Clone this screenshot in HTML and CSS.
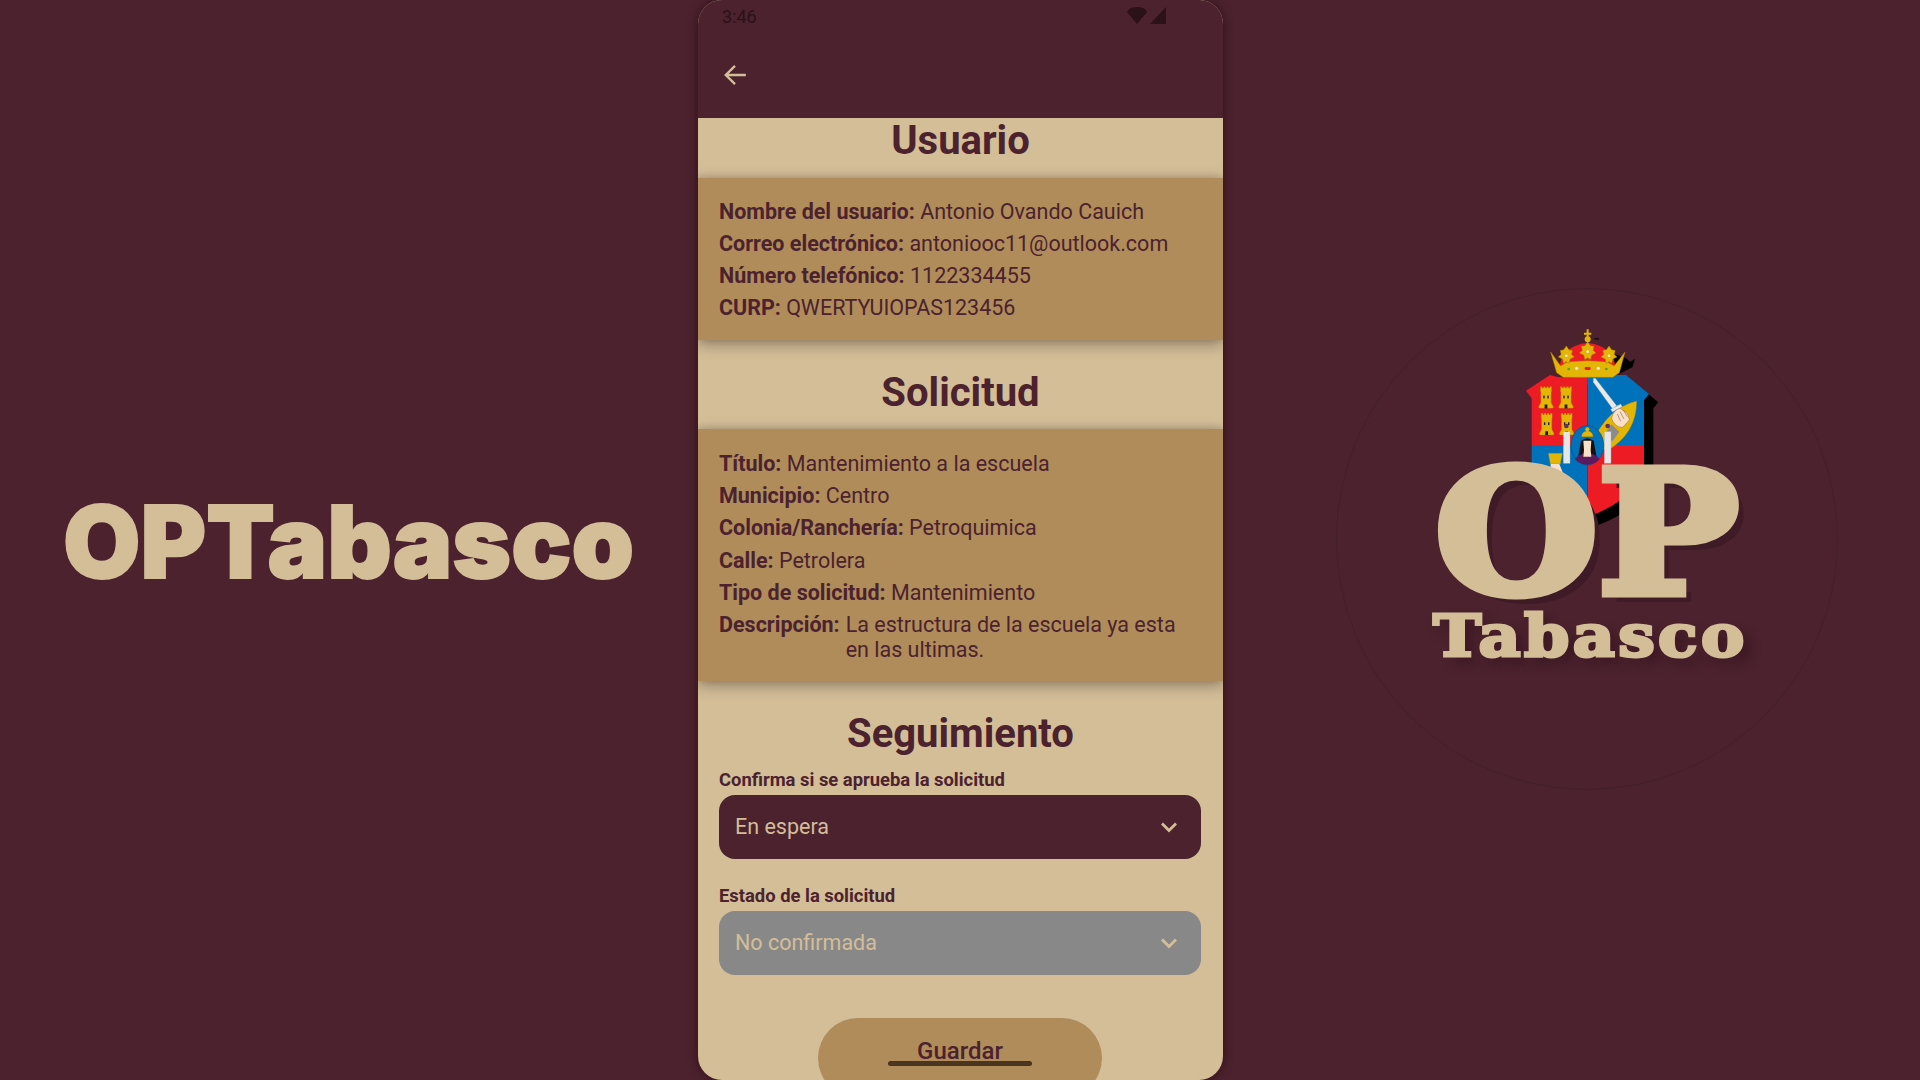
FILE: index.html
```html
<!DOCTYPE html>
<html lang="es">
<head>
    <meta charset="UTF-8">
    <meta name="viewport" content="width=device-width, initial-scale=1.0">
    <title>OPTabasco</title>
    <link rel="stylesheet" href="styles.css">
</head>
<body>
    <svg class="defs" width="0" height="0">
        <symbol id="castillo" viewBox="0 0 44 66">
            <path d="M6 2h5v4h4V2h5v4h4V2h5v4h4V2h5v14l-1 2v30l7 14-4 3H4l-4-3 7-14V18L6 16z" fill="#e3b505" stroke="#a98300" stroke-width="1"/>
            <rect x="14" y="28" width="4" height="8" fill="#1a1a1a"/>
            <rect x="26" y="28" width="4" height="8" fill="#1a1a1a"/>
            <rect x="18" y="54" width="8" height="12" fill="#1a1a1a"/>
        </symbol>
        <symbol id="hoja" viewBox="0 0 50 60">
            <path d="M25 0l8 12 11 2-3 12 9 8-13 6-4 14-8-6-8 6-4-14-13-6 9-8-3-12 11-2z" fill="#e3b505" stroke="#a98300" stroke-width="1.5"/>
            <circle cx="25" cy="30" r="4" fill="#e8e8e8"/>
        </symbol>
    </svg>

    <div class="pantalla">
        <div class="lado-izq">
            <h1 class="marca">OPTabasco</h1>
        </div>

        <div class="telefono">
            <div class="cabecera">
                <div class="status">
                    <span class="hora">3:46</span>
                    <span class="status-iconos">
                        <svg width="20" height="17" viewBox="0 0 20 17"><path d="M0 5Q2 0 10 0T20 5L10 17z" fill="#2b1118"/></svg>
                        <svg width="17" height="17" viewBox="0 0 17 17"><path d="M16 0v17H0z" fill="#2b1118"/></svg>
                    </span>
                </div>
                <svg class="atras" width="26" height="26" viewBox="0 0 24 24"><path d="M22 12H3.500M12 3.500L3.500 12l8.500 8.500" fill="none" stroke="#d3be98" stroke-width="2.200"/></svg>
            </div>

            <h2 class="titulo titulo-usuario">Usuario</h2>
            <div class="tarjeta">
                <p><b>Nombre del usuario:</b> Antonio Ovando Cauich</p>
                <p><b>Correo electrónico:</b> antoniooc11@outlook.com</p>
                <p><b>Número telefónico:</b> 1122334455</p>
                <p><b>CURP:</b> QWERTYUIOPAS123456</p>
            </div>

            <h2 class="titulo titulo-solicitud">Solicitud</h2>
            <div class="tarjeta">
                <p><b>Título:</b> Mantenimiento a la escuela</p>
                <p><b>Municipio:</b> Centro</p>
                <p><b>Colonia/Ranchería:</b> Petroquimica</p>
                <p><b>Calle:</b> Petrolera</p>
                <p><b>Tipo de solicitud:</b> Mantenimiento</p>
                <p class="fila-desc"><b>Descripción:</b> <span>La estructura de la escuela ya esta en las ultimas.</span></p>
            </div>

            <h2 class="titulo titulo-seguimiento">Seguimiento</h2>
            <div class="form">
                <label class="etiqueta">Confirma si se aprueba la solicitud</label>
                <div class="combo">
                    <span>En espera</span>
                    <svg width="18" height="12" viewBox="0 0 18 12"><path d="M2 2.500l7 7 7-7" fill="none" stroke="#d3be98" stroke-width="2.800"/></svg>
                </div>
                <label class="etiqueta etiqueta-2">Estado de la solicitud</label>
                <div class="combo combo-off">
                    <span>No confirmada</span>
                    <svg width="18" height="12" viewBox="0 0 18 12"><path d="M2 2.500l7 7 7-7" fill="none" stroke="#d3be98" stroke-width="2.800"/></svg>
                </div>
                <button class="guardar">Guardar</button>
            </div>
            <div class="home-bar"></div>
        </div>

        <div class="lado-der">
            <div class="logo">
                <div class="circulo"></div>
                <svg class="escudo" width="170" height="210" viewBox="0 0 510 630">
                    <!-- sombra -->
                    <path d="M106 237L178 190Q220 205 290 190H406L475 247L460 265V465Q440 560 290 617Q120 560 123 465V260z" fill="#000"/>
                    <path d="M330 100q50 10 60 25l15-8-8 25-60 30z" fill="#000"/>
                    <path d="M283 55h14v3h-14z" fill="#000"/>
                    <!-- escudo -->
                    <clipPath id="forma"><path d="M78 212L150 165Q192 180 262 165H378L447 222L432 240V440Q412 535 262 592Q110 535 95 440V235z"/></clipPath>
                    <g clip-path="url(#forma)">
                        <rect x="60" y="150" width="202" height="225" fill="#ed1c24"/>
                        <rect x="262" y="150" width="200" height="225" fill="#0072bc"/>
                        <rect x="60" y="375" width="202" height="230" fill="#0072bc"/>
                        <rect x="262" y="375" width="200" height="230" fill="#ed1c24"/>
                    </g>
                    <use href="#castillo" x="114" y="198" width="48" height="68"/>
                    <use href="#castillo" x="174" y="198" width="48" height="68"/>
                    <use href="#castillo" x="116" y="278" width="48" height="68"/>
                    <use href="#castillo" x="176" y="278" width="48" height="68"/>
                    <!-- brazo y espada -->
                    <path d="M275 372Q320 265 410 243Q410 340 322 392z" fill="#e3b505" stroke="#a98300" stroke-width="1"/>
                    <path d="M312 345l22-32 24 22-20 28z" fill="#8a8a8a"/>
                    <path d="M280 175l6 0 64 82-12 10-58-80z" fill="#e9e9e9" stroke="#999" stroke-width="1"/>
                    <path d="M332 268l30-16 5 8-30 16z" fill="#e9e9e9" stroke="#999" stroke-width="1"/>
                    <path d="M335 295q5-25 25-30l22 15 6 20-20 22q-25 0-33-27z" fill="#fbe0c8" stroke="#6b4a3a" stroke-width="1"/>
                    <path d="M360 275l12 22M370 270l12 20M352 282l10 22" fill="none" stroke="#6b4a3a" stroke-width="1.500"/>
                    <!-- columnas -->
                    <rect x="190" y="335" width="20" height="95" fill="#e6e6e6" stroke="#aaa" stroke-width="1"/>
                    <rect x="313" y="335" width="20" height="95" fill="#e6e6e6" stroke="#aaa" stroke-width="1"/>
                    <circle cx="199" cy="318" r="7" fill="#662d5e"/>
                    <circle cx="323" cy="318" r="7" fill="#662d5e"/>
                    <!-- ovalo -->
                    <ellipse cx="262" cy="376" rx="49" ry="59" fill="#0072bc" stroke="#0a4f80" stroke-width="2"/>
                    <path d="M225 418q15-22 37-22t37 22q-15 16-37 16t-37-16z" fill="#5c1a5e"/>
                    <path d="M243 362q19-15 38 0l8 45-27-12-27 12z" fill="#111"/>
                    <path d="M250 362h24l-2 28 2 20h-24l2-20z" fill="#fbe0c8"/>
                    <path d="M245 350q0-15 17-18 17 3 17 18z" fill="#e3b505" stroke="#a98300"/>
                    <circle cx="262" cy="328" r="6" fill="#e3b505"/>
                    <!-- reina -->
                    <path d="M145 400h42l-6 32h-30z" fill="#e3b505" stroke="#a98300" stroke-width="1"/>
                    <path d="M152 432h26l22 55-14 8-10-18h-24z" fill="#fbe0c8"/>
                    <path d="M182 472l12 18 14-2 8 20-14 6-14-14-8-20z" fill="#5c1a3a"/>
                    <!-- corona -->
                    <path d="M180 152Q175 100 225 78Q262 60 300 78Q350 100 345 152z" fill="#ed1c24"/>
                    <path d="M152 96l30 42 20-12 30-2 30-2 30 2 30 2 20 12 33-42-17 62-20 14H190l-20-14z" fill="#e3b505" stroke="#a98300" stroke-width="1.500"/>
                    <use href="#hoja" x="174" y="78" width="50" height="58"/>
                    <use href="#hoja" x="238" y="64" width="50" height="62"/>
                    <use href="#hoja" x="302" y="78" width="50" height="58"/>
                    <rect x="254" y="141" width="18" height="9" rx="4" fill="#ed1c24"/>
                    <circle cx="230" cy="145" r="5" fill="#e8e8e8"/>
                    <circle cx="295" cy="145" r="5" fill="#e8e8e8"/>
                    <circle cx="206" cy="147" r="4" fill="#39a845"/>
                    <circle cx="319" cy="147" r="4" fill="#39a845"/>
                    <circle cx="263" cy="58" r="9" fill="#e3b505"/>
                    <path d="M260 28h6v10h8v6h-8v10h-6V44h-8v-6h8z" fill="#e3b505"/>
                </svg>
                <div class="logo-op">OP</div>
                <div class="logo-tabasco">Tabasco</div>
            </div>
        </div>
    </div>
</body>
</html>
```

FILE: styles.css
```css
* {
    box-sizing: border-box;
}
body {
    margin: 0;
    background-color: #4b222e;
    font-family: Roboto, sans-serif;
    color: #4b222e;
    overflow: hidden;
}
.defs {
    display: block;
    height: 0;
}
.pantalla {
    display: flex;
    height: 1080px;
}
.lado-izq {
    width: 698px;
    display: flex;
    align-items: center;
    padding: 0 0 0 63px;
}
.marca {
    margin: 4px 0 0;
    font-family: Inter, "Liberation Sans", sans-serif;
    font-size: 100px;
    font-weight: 900;
    color: #d3be98;
    -webkit-text-stroke: 2px #d3be98;
    line-height: 1;
}

/* telefono */
.telefono {
    position: relative;
    width: 525px;
    height: 1080px;
    background-color: #d3be98;
    border-radius: 24px;
    overflow: hidden;
    box-shadow: 0 0 10px rgba(30, 5, 15, 0.6);
}
.cabecera {
    height: 118px;
    background-color: #4b222e;
    padding: 0 0 0 24px;
}
.status {
    display: flex;
    justify-content: space-between;
    align-items: center;
    height: 33px;
    padding: 0 56px 0 0;
}
.hora {
    font-size: 18px;
    color: #2b1118;
}
.status-iconos {
    display: flex;
    align-items: center;
    gap: 3px;
    margin-top: -3px;
}
.atras {
    display: block;
    margin-top: 29px;
}
.titulo {
    margin: 0;
    font-size: 40px;
    font-weight: 700;
    text-align: center;
    line-height: 46px;
    background-color: #d3be98;
}
.titulo-usuario {
    height: 60px;
}
.titulo-solicitud {
    height: 89px;
    padding-top: 30px;
}
.titulo-seguimiento {
    height: 88px;
    padding-top: 30px;
}
.tarjeta {
    position: relative;
    background-color: #b08c5b;
    padding: 21px 21px 19px;
    font-size: 21.5px;
    line-height: 26px;
    box-shadow: 0 4px 14px rgba(30, 15, 10, 0.38), 0 -1px 6px rgba(30, 15, 10, 0.12);
}
.titulo-solicitud + .tarjeta {
    padding-top: 22px;
}
.tarjeta p {
    margin: 0 0 6.1px;
}
.tarjeta p:last-child {
    margin-bottom: 0;
}
.tarjeta b {
    font-weight: 700;
}
.fila-desc {
    display: flex;
    gap: 6px;
    padding-right: 8px;
}
.fila-desc b {
    flex: none;
}
.fila-desc span {
    line-height: 25px;
}

/* formulario */
.form {
    padding: 0 22px 0 21px;
}
.etiqueta {
    display: block;
    font-size: 18.4px;
    font-weight: 700;
    line-height: 22px;
    margin-bottom: 4px;
}
.etiqueta-2 {
    margin-top: 26px;
}
.combo {
    display: flex;
    justify-content: space-between;
    align-items: center;
    height: 64px;
    padding: 0 23px 0 16px;
    border-radius: 16px;
    background-color: #4b222e;
    color: #d3be98;
    font-size: 21.5px;
}
.combo-off {
    background-color: #888888;
}
.guardar {
    display: block;
    width: 284px;
    height: 80px;
    margin: 43px auto 0;
    padding: 0 0 14px;
    border: none;
    border-radius: 40px;
    background-color: #b08c5b;
    color: #4b222e;
    font-family: Roboto, sans-serif;
    font-size: 24px;
    font-weight: 500;
}
.home-bar {
    position: absolute;
    left: 190px;
    top: 1061px;
    width: 144px;
    height: 5px;
    border-radius: 3px;
    background-color: #4a3620;
}

/* logo derecha */
.lado-der {
    flex: 1;
}
.logo {
    position: relative;
    width: 697px;
    height: 1080px;
}
.circulo {
    position: absolute;
    left: 113px;
    top: 288px;
    width: 502px;
    height: 502px;
    border-radius: 50%;
    border: 1px solid #42202b;
}
.escudo {
    position: absolute;
    left: 277px;
    top: 320px;
}
.logo-op {
    position: absolute;
    left: 212px;
    top: 468px;
    font-family: "DejaVu Serif", serif;
    font-size: 170px;
    font-weight: 700;
    line-height: 130px;
    color: #d3be98;
    -webkit-text-stroke: 9px #d3be98;
    text-shadow: 9px 9px 0 #3f1b28;
    transform: scaleX(1.1);
    transform-origin: left center;
}
.logo-tabasco {
    position: absolute;
    left: 210px;
    top: 606px;
    font-family: "DejaVu Serif", serif;
    font-size: 58px;
    font-weight: 700;
    line-height: 60px;
    letter-spacing: 3px;
    color: #d3be98;
    -webkit-text-stroke: 3px #d3be98;
    text-shadow: 7px 7px 10px #3a1722;
    transform: scaleX(1.12);
    transform-origin: left center;
}
```
